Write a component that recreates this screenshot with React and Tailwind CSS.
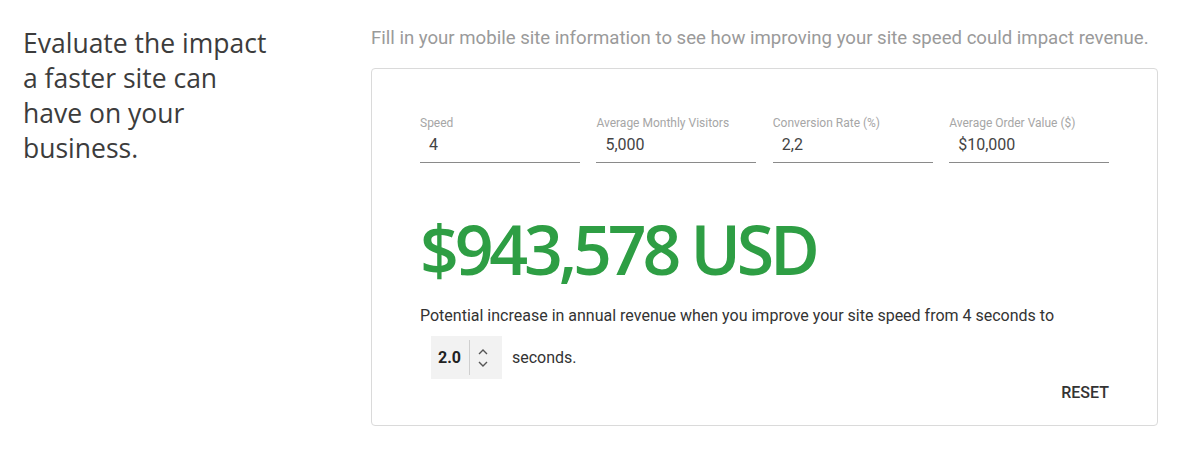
import { useState } from "react";

const fields = [
  { label: "Speed", value: "4" },
  { label: "Average Monthly Visitors", value: "5,000" },
  { label: "Conversion Rate (%)", value: "2,2" },
  { label: "Average Order Value ($)", value: "$10,000" },
];

export default function App() {
  const [target, setTarget] = useState(2.0);

  return (
    <div className="flex bg-white w-[1178px] h-[449px] font-['Roboto',sans-serif]">
      {/* Left heading */}
      <div className="w-[371px] shrink-0 pl-[23px] pt-[26px]">
        <h2 className="w-[256px] text-[26.5px] leading-[35px] text-[#3c3c3c] font-['Open_Sans',sans-serif]">
          Evaluate the impact a faster site can have on your business.
        </h2>
      </div>

      {/* Right calculator */}
      <div className="w-[787px] shrink-0 pt-[26px]">
        <p className="text-[18.6px] leading-[24px] text-[#9a9a9a] whitespace-nowrap">
          Fill in your mobile site information to see how improving your site speed could impact revenue.
        </p>

        <div className="mt-[18px] h-[358px] border border-[#dadada] rounded-[4px] px-[48px] pt-[47px]">
          <div className="flex gap-[16.6px]">
            {fields.map((f) => (
              <div key={f.label} className="w-[160px]">
                <div className="text-[12px] leading-[14px] text-[#a6a6a6]">{f.label}</div>
                <div className="mt-[4px] pl-[9px] pb-[6px] text-[16px] leading-[22px] text-[#444] border-b border-[#8a8a8a]">
                  {f.value}
                </div>
              </div>
            ))}
          </div>

          <div className="mt-[46px] text-[68px] leading-[80px] font-semibold text-[#2e9e44] font-['Open_Sans',sans-serif] tracking-[-4.2px]">
            $943,578 USD
          </div>

          <p className="mt-[16px] text-[16px] leading-[22px] text-[#333]">
            Potential increase in annual revenue when you improve your site speed from 4 seconds to
          </p>

          <div className="mt-[9px] flex items-center">
            <div className="ml-[11px] flex items-center h-[43px] w-[71px] bg-[#f2f2f2]">
              <span className="pl-[7px] w-[38px] text-[16px] font-bold text-[#222]">{target.toFixed(1)}</span>
              <div className="w-px h-[35px] bg-[#cfcfcf]" />
              <div className="flex flex-col items-center justify-center gap-[6px] pl-[8px]">
                <button onClick={() => setTarget((t) => t + 0.1)} className="text-[#555]">
                  <svg width="10" height="6" viewBox="0 0 10 6" fill="none" stroke="currentColor" strokeWidth="1.4">
                    <path d="M1 5 L5 1 L9 5" />
                  </svg>
                </button>
                <button onClick={() => setTarget((t) => Math.max(0, t - 0.1))} className="text-[#555]">
                  <svg width="10" height="6" viewBox="0 0 10 6" fill="none" stroke="currentColor" strokeWidth="1.4">
                    <path d="M1 1 L5 5 L9 1" />
                  </svg>
                </button>
              </div>
            </div>
            <span className="ml-[10px] text-[16px] text-[#333]">seconds.</span>
          </div>

          <div className="flex justify-end mt-[2px]">
            <button className="text-[16px] font-medium text-[#333]">RESET</button>
          </div>
        </div>
      </div>
    </div>
  );
}
